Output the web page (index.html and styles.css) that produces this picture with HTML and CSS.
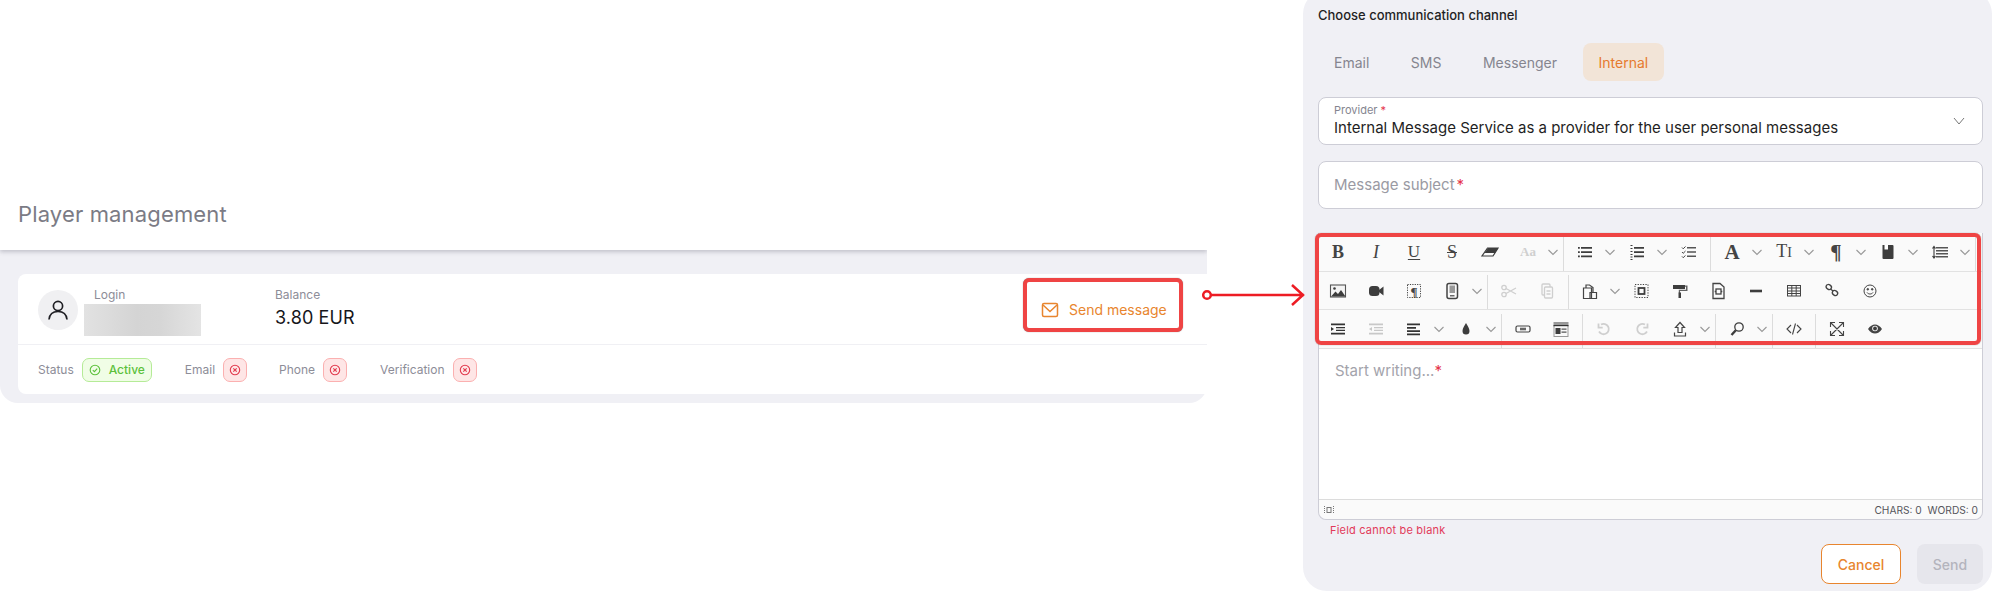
FILE: index.html
```html
<!DOCTYPE html>
<html lang="en">
<head>
  <meta charset="UTF-8" />
  <title>Player management</title>
  <link rel="stylesheet" href="styles.css">
</head>
<body>
  <svg width="0" height="0" class="defs">
    <symbol id="caret" viewBox="0 0 14 24"><path d="M2.500 10l4.500 4.500 4.500-4.500" fill="none" stroke="#999" stroke-width="1.100"/></symbol>
    <symbol id="x-circle" viewBox="0 0 12 12"><circle cx="6" cy="6" r="4.700" fill="none" stroke="#e23a4e" stroke-width="1.100"/><path d="M4.300 4.300l3.400 3.400M7.700 4.300L4.300 7.700" stroke="#e23a4e" stroke-width="1.100"/></symbol>
  </svg>

  <section class="left">
    <header class="page-head"><h1>Player management</h1></header>
    <div class="panel">
      <div class="card">
        <div class="card-top">
          <div class="avatar">
            <svg width="24" height="24" viewBox="0 0 24 24" fill="none" stroke="#1f1f24" stroke-width="1.700"><circle cx="12" cy="8" r="4.600"/><path d="M3 21.500c.5-5 4-8 9-8s8.500 3 9 8"/></svg>
          </div>
          <div class="login">
            <span class="label">Login</span>
            <div class="blurred"></div>
          </div>
          <div class="balance">
            <span class="label">Balance</span>
            <div class="amount">3.80 EUR</div>
          </div>
          <button class="send-btn">
            <svg width="18" height="18" viewBox="0 0 18 18" fill="none" stroke="#e8852e" stroke-width="1.500"><rect x="1.500" y="2.500" width="15" height="13" rx="1.500"/><path d="M2 4l7 6.500L16 4"/></svg>
            Send message
          </button>
        </div>
        <div class="card-bottom">
          <span class="label">Status</span>
          <span class="badge ok">
            <svg width="12" height="12" viewBox="0 0 12 12" fill="none" stroke="#5cc13b" stroke-width="1.100"><circle cx="6" cy="6" r="4.800"/><path d="M3.800 6.100l1.600 1.500 2.800-3"/></svg>
            Active
          </span>
          <span class="label email-label">Email</span>
          <span class="badge bad"><svg width="12" height="12"><use href="#x-circle"/></svg></span>
          <span class="label phone-label">Phone</span>
          <span class="badge bad"><svg width="12" height="12"><use href="#x-circle"/></svg></span>
          <span class="label verif-label">Verification</span>
          <span class="badge bad"><svg width="12" height="12"><use href="#x-circle"/></svg></span>
        </div>
      </div>
    </div>
  </section>

  <svg class="connector" width="110" height="30" viewBox="0 0 110 30" fill="none" stroke="#ed1c24" stroke-width="2.500">
    <circle cx="7" cy="15" r="3.800" fill="#fff"/>
    <path d="M11 15h93M92 5l11 10-11 10"/>
  </svg>

  <section class="dialog">
    <div class="dialog-title">Choose communication channel</div>
    <nav class="tabs">
      <span class="tab">Email</span>
      <span class="tab">SMS</span>
      <span class="tab">Messenger</span>
      <span class="tab active">Internal</span>
    </nav>

    <div class="field select">
      <div class="select-text">
        <div class="field-label">Provider <i>*</i></div>
        <div class="field-value">Internal Message Service as a provider for the user personal messages</div>
      </div>
      <svg width="14" height="14" viewBox="0 0 14 14" fill="none" stroke="#777" stroke-width="1"><path d="M2 4l5 6 5-6"/></svg>
    </div>

    <div class="field subject"><span>Message subject<i>*</i></span></div>

    <div class="editor">
      <div class="toolbar-mark"></div>
      <div class="toolbar">
        <div class="tb-row">
          <span class="btn glyph bold">B</span>
          <span class="btn glyph ital">I</span>
          <span class="btn glyph under">U</span>
          <span class="btn glyph strike">S</span>
          <span class="btn"><svg class="ico" viewBox="0 0 24 24"><path d="M9.500 8H20l-5 8H4z" fill="#fafafa" stroke="#3d3d3d" stroke-width="1.200"/><path d="M10 8h10l-3 5H6.500z" fill="#3d3d3d"/></svg></span>
          <span class="btn drop"><span class="glyph-sm off">Aa</span><svg class="car"><use href="#caret"/></svg></span>
          <i class="sep"></i>
          <span class="btn drop"><svg class="ico" viewBox="0 0 24 24" fill="#3d3d3d"><path d="M8 7h11v1.800H8zM8 11.200h11V13H8zM8 15.500h11v1.800H8z"/><path d="M5 7h1.800v1.800H5zM5 11.200h1.800V13H5zM5 15.500h1.800v1.800H5z"/></svg><svg class="car"><use href="#caret"/></svg></span>
          <span class="btn drop"><svg class="ico" viewBox="0 0 24 24" fill="#3d3d3d"><path d="M9 7h10v1.800H9zM9 11.200h10V13H9zM9 15.500h10v1.800H9z"/><path d="M5.500 5h2v1h-2zM5.500 8h2v1h-2zM5.500 11h2v1h-2zM5.500 14h2v1h-2zM5.500 16.500h2v1h-2zM5.500 19h2v1h-2z"/></svg><svg class="car"><use href="#caret"/></svg></span>
          <span class="btn"><svg class="ico" viewBox="0 0 24 24" fill="#555"><path d="M10 7h9v1.400h-9zM10 11.300h9v1.400h-9zM10 15.600h9V17h-9z"/><path d="M5 7.500l1.200 1.300L8.500 6.500M5 12l1.200 1.300 2.300-2.300M5 16.400l1.200 1.300 2.300-2.300" fill="none" stroke="#444" stroke-width="1"/></svg></span>
          <i class="sep"></i>
          <span class="btn drop"><span class="glyph bold big">A</span><svg class="car"><use href="#caret"/></svg></span>
          <span class="btn drop"><span class="glyph ti">T<small>I</small></span><svg class="car"><use href="#caret"/></svg></span>
          <span class="btn drop"><span class="glyph bold big">¶</span><svg class="car"><use href="#caret"/></svg></span>
          <span class="btn drop"><svg class="ico" viewBox="0 0 24 24"><path d="M7 5h9.500a1 1 0 0 1 1 1v12a1 1 0 0 1-1 1H7.500a1 1 0 0 1-1-1V5.500z" fill="#3d3d3d"/><path d="M8.500 5H12v4.500H8.500z" fill="#fff"/></svg><svg class="car"><use href="#caret"/></svg></span>
          <span class="btn drop"><svg class="ico" viewBox="0 0 24 24"><path d="M8 7h12v1.600H8zM8 10h12v1.600H8zM8 13h12v1.600H8zM8 16h12v1.600H8z" fill="#555"/><path d="M6 7v10.500M4.500 8.500L6 6.500l1.500 2M4.500 16L6 18l1.500-2" fill="none" stroke="#3d3d3d" stroke-width="1.100"/></svg><svg class="car"><use href="#caret"/></svg></span>
          <i class="sep"></i>
        </div>

        <div class="tb-row">
          <span class="btn"><svg class="ico" viewBox="0 0 24 24"><rect x="4.500" y="6" width="15" height="12" fill="#f4f4f4" stroke="#555" stroke-width="1.100"/><path d="M5 17.500l4.500-5 2.500 2.500 3-4 4.500 6.500z" fill="#3d3d3d"/><circle cx="8.500" cy="9.500" r="1.300" fill="#3d3d3d"/></svg></span>
          <span class="btn"><svg class="ico" viewBox="0 0 24 24" fill="#3d3d3d"><rect x="5" y="7" width="10.500" height="10" rx="3.500"/><path d="M15 11l4.500-3.500v9L15 13z"/></svg></span>
          <span class="btn"><svg class="ico" viewBox="0 0 24 24"><rect x="5.500" y="5.500" width="13" height="13" fill="none" stroke="#444" stroke-dasharray="1.200 1.200"/><text x="12" y="16.500" class="svg-glyph">¶</text></svg></span>
          <span class="btn drop"><svg class="ico" viewBox="0 0 24 24" fill="none" stroke="#444"><rect x="7" y="4.500" width="10.500" height="15" rx="2" stroke-width="1.500"/><path d="M9.500 6.500h5.500v7.500H9.500z" fill="#999" stroke="none"/><path d="M10 16.800h4.500" stroke-width="1.200"/></svg><svg class="car"><use href="#caret"/></svg></span>
          <i class="sep"></i>
          <span class="btn"><svg class="ico" viewBox="0 0 24 24" fill="none" stroke="#cfcfcf" stroke-width="1.300"><circle cx="7" cy="8.500" r="2.200"/><circle cx="7" cy="15.500" r="2.200"/><path d="M9 9.500l10 5.500M9 14.500l10-5.500"/></svg></span>
          <span class="btn"><svg class="ico" viewBox="0 0 24 24" fill="none" stroke="#cfcfcf" stroke-width="1.300"><rect x="7" y="5" width="8" height="11" rx="1"/><rect x="9.500" y="8" width="8" height="11" rx="1" fill="#fafafa"/><path d="M11.500 12h4M11.500 15h4"/></svg></span>
          <i class="sep"></i>
          <span class="btn drop"><svg class="ico" viewBox="0 0 24 24" fill="none" stroke="#444" stroke-width="1.200"><path d="M5.500 9h8v10.500h-8zM12 13.500h6.500v6H12zM8 9V6h3.500l3.500 2.500V13"/></svg><svg class="car"><use href="#caret"/></svg></span>
          <span class="btn"><svg class="ico" viewBox="0 0 24 24"><rect x="5" y="5.500" width="13" height="13" fill="none" stroke="#444" stroke-dasharray="1.300 1.300"/><rect x="8.500" y="9" width="6" height="6" fill="none" stroke="#3d3d3d" stroke-width="1.800"/></svg></span>
          <span class="btn"><svg class="ico" viewBox="0 0 24 24" fill="#3d3d3d"><path d="M5 6h12v4H5z"/><path d="M17 6.500h2.500V12H12v2h-1.200v-3.200H18V7.800h-1z" opacity=".8"/><path d="M10.500 13.500H13V19h-2.500z"/></svg></span>
          <span class="btn"><svg class="ico" viewBox="0 0 24 24" fill="none" stroke="#444" stroke-width="1.300"><path d="M7 4.500h7l4 3.500v11.500H7z"/><rect x="10" y="10" width="5" height="5"/><path d="M8.700 12.500H10M15 12.500h1.300"/></svg></span>
          <span class="btn"><svg class="ico" viewBox="0 0 24 24"><path d="M6 10.700h12v2.600H6z" fill="#3d3d3d"/></svg></span>
          <span class="btn"><svg class="ico" viewBox="0 0 24 24" fill="none" stroke="#444" stroke-width="1"><rect x="5.500" y="6.500" width="13" height="10.500"/><path d="M5.500 9h13M5.500 12h13M5.500 14.500h13M9.800 6.500V17M14.200 6.500V17"/></svg></span>
          <span class="btn"><svg class="ico" viewBox="0 0 24 24" fill="none" stroke="#444" stroke-width="1.300"><ellipse cx="8.800" cy="8" rx="2.800" ry="2.300" transform="rotate(35 8.800 8)"/><ellipse cx="15" cy="14" rx="2.800" ry="2.300" transform="rotate(35 15 14)"/><path d="M10.500 10l2.500 2"/></svg></span>
          <span class="btn"><svg class="ico" viewBox="0 0 24 24" fill="none" stroke="#444" stroke-width="1"><circle cx="12" cy="12" r="6"/><circle cx="9.800" cy="10.300" r=".8" fill="#444"/><circle cx="14.200" cy="10.300" r=".8" fill="#444"/><path d="M9 13.500c1.300 2 4.700 2 6 0"/></svg></span>
        </div>

        <div class="tb-row">
          <span class="btn"><svg class="ico" viewBox="0 0 24 24" fill="#333"><path d="M5 6.500h14v1.800H5zM10 10h9v1.300h-9zM10 12.700h9V14h-9zM5 15.700h14v1.800H5zM5 10l3 2-3 2z"/></svg></span>
          <span class="btn"><svg class="ico" viewBox="0 0 24 24" fill="#c8c8c8"><path d="M5 6.500h14v1.800H5zM10 10h9v1.300h-9zM10 12.700h9V14h-9zM5 15.700h14v1.800H5zM8 10l-3 2 3 2z"/></svg></span>
          <span class="btn drop"><svg class="ico" viewBox="0 0 24 24" fill="#333"><path d="M5 6.500h13v1.800H5zM5 10h9v1.800H5zM5 13.200h13V15H5zM5 16.500h13v1.800H5z"/></svg><svg class="car"><use href="#caret"/></svg></span>
          <span class="btn drop"><svg class="ico" viewBox="0 0 24 24" fill="#3d3d3d"><path d="M12 6c1.500 3 3.500 5 3.500 8a3.500 3.500 0 0 1-7 0c0-3 2-5 3.500-8z"/></svg><svg class="car"><use href="#caret"/></svg></span>
          <i class="sep"></i>
          <span class="btn"><svg class="ico" viewBox="0 0 24 24"><rect x="5" y="9" width="14" height="6" rx="1.500" fill="none" stroke="#444" stroke-width="1.200"/><rect x="9" y="10.700" width="6" height="2.600" fill="#666"/></svg></span>
          <span class="btn"><svg class="ico" viewBox="0 0 24 24"><rect x="4.500" y="5" width="15" height="15" fill="#999"/><rect x="4.500" y="8" width="15" height="1.300" fill="#333"/><rect x="5.500" y="9.300" width="13" height="9.700" fill="#fafafa"/><rect x="6.500" y="11" width="5" height="6" fill="#3d3d3d"/><path d="M12.500 11.500h5v1.300h-5zM12.500 14.500h5v1.300h-5z" fill="#555"/></svg></span>
          <i class="sep"></i>
          <span class="btn"><svg class="ico" viewBox="0 0 24 24" fill="none" stroke="#cfcfcf" stroke-width="1.800"><path d="M9 7.500a5.200 5.200 0 1 1-2 7"/><path d="M6.500 6.500v4.200h4.200"/></svg></span>
          <span class="btn"><svg class="ico" viewBox="0 0 24 24" fill="none" stroke="#cfcfcf" stroke-width="1.800"><path d="M15 7.500a5.200 5.200 0 1 0 2 7"/><path d="M17.500 6.500v4.200h-4.200"/></svg></span>
          <span class="btn drop"><svg class="ico" viewBox="0 0 24 24" fill="none" stroke="#444" stroke-width="1.200"><path d="M12 5.500l-4.500 5H10v5h4v-5h2.500zM6.500 15.500v3.500h11v-3.500"/></svg><svg class="car"><use href="#caret"/></svg></span>
          <i class="sep"></i>
          <span class="btn drop"><svg class="ico" viewBox="0 0 24 24" fill="none" stroke="#3d3d3d" stroke-width="1.300"><circle cx="14" cy="10" r="4.200"/><path d="M10.800 13.200L6.500 18" stroke-width="2.400"/></svg><svg class="car"><use href="#caret"/></svg></span>
          <i class="sep"></i>
          <span class="btn"><svg class="ico" viewBox="0 0 24 24" fill="none" stroke="#444" stroke-width="1.100"><path d="M9 8l-4 4 4 4M15 8l4 4-4 4M13.500 6.500l-3 11"/></svg></span>
          <i class="sep"></i>
          <span class="btn"><svg class="ico" viewBox="0 0 24 24" fill="none" stroke="#444" stroke-width="1.100"><path d="M6 6l12 12M18 6L6 18M5.500 10V5.500H10M14 5.500h4.500V10M5.500 14v4.500H10M18.500 14v4.500H14"/></svg></span>
          <span class="btn"><svg class="ico" viewBox="0 0 24 24"><path d="M5 12c2-3 4.500-4.500 7-4.500s5 1.500 7 4.500c-2 3-4.500 4.500-7 4.500S7 15 5 12z" fill="#444"/><circle cx="12" cy="11.500" r="2.800" fill="#fafafa"/><circle cx="12" cy="11.500" r="1.900" fill="#3d3d3d"/></svg></span>
        </div>
      </div>

      <div class="content">Start writing...<i>*</i></div>
      <div class="status">
        <svg width="10" height="10" viewBox="0 0 10 10" fill="none" stroke="#777" stroke-width="1"><rect x="3" y="2.500" width="4" height="5"/><path d="M.5 1v8M9.500 1v8" stroke-dasharray="1 1"/></svg>
        <span>CHARS: 0 &nbsp;WORDS: 0</span>
      </div>
    </div>

    <div class="error">Field cannot be blank</div>
    <div class="actions">
      <button class="cancel">Cancel</button>
      <button class="send" disabled>Send</button>
    </div>
  </section>
</body>
</html>
```

FILE: styles.css
```css
* {
  box-sizing: border-box;
}

html, body {
  height: 591px;
}

body {
  margin: 0;
  display: flex;
  overflow: hidden;
  position: relative;
  background: #fff;
  font-family: 'Inter', 'Liberation Sans', sans-serif;
  color: #1f1f24;
}

.defs {
  position: absolute;
}

i {
  font-style: normal;
}

/* left side */
.left {
  width: 1207px;
  margin-right: 96px;
  flex: none;
}

.page-head {
  height: 250px;
  padding: 200px 18px 0;
  position: relative;
  background: #fff;
  box-shadow: 0 2px 4px rgba(60, 60, 80, 0.25);
  clip-path: inset(0 0 -8px 0);
}

.page-head h1 {
  margin: 0;
  font-size: 22px;
  line-height: 28px;
  font-weight: 400;
  letter-spacing: 0.15px;
  color: #7b7b85;
}

.panel {
  padding: 24px 0 9px 18px;
  background: #f0f0f5;
  border-radius: 0 0 18px 18px;
}

.card {
  height: 120px;
  background: #fff;
  border-radius: 8px 0 0 8px;
}

.card-top {
  height: 71px;
  padding: 4px 24px 0 20px;
  display: flex;
  border-bottom: 1px solid #f0f0f4;
}

.avatar {
  width: 40px;
  height: 40px;
  margin-top: 12px;
  border-radius: 50%;
  background: #f0f0f2;
  display: flex;
  align-items: center;
  justify-content: center;
}

.label {
  font-size: 12px;
  line-height: 16px;
  color: #8d8d98;
}

.login {
  width: 191px;
  margin-left: 6px;
  padding-top: 9px;
}

.login .label {
  margin-left: 10px;
  display: block;
}

.blurred {
  width: 117px;
  height: 32px;
  margin-top: 1px;
  background: linear-gradient(90deg, #e2e2e2, #d4d4d4 45%, #d6d6d6 65%, #e4e4e4);
}

.balance {
  padding-top: 9px;
}

.balance .label {
  display: block;
}

.amount {
  margin-top: 4px;
  font-size: 18px;
  line-height: 22px;
  letter-spacing: 0.1px;
  color: #16161a;
}

.send-btn {
  width: 160px;
  height: 54px;
  margin: 0 0 0 auto;
  padding: 9px 0 0 14px;
  display: flex;
  align-items: center;
  gap: 10px;
  background: #fff;
  border: 4px solid #ef4444;
  border-radius: 6px;
  box-shadow: 0 0 1px #777;
  font: 400 14px 'Inter', sans-serif;
  color: #e8852e;
}

.card-bottom {
  height: 48px;
  padding: 1px 20px 0;
  display: flex;
  align-items: center;
}

.badge {
  height: 24px;
  margin-left: 8px;
  display: inline-flex;
  align-items: center;
  justify-content: center;
  border-radius: 7px;
  border: 1px solid;
}

.badge.ok {
  width: 70px;
  gap: 8px;
  background: #f0fde6;
  border-color: #b5eb97;
  color: #5cc13b;
  font-size: 12px;
  font-weight: 500;
}

.badge.bad {
  width: 24px;
  background: #fee6e6;
  border-color: #fbb0b0;
}

.email-label {
  margin-left: 33px;
}

.phone-label {
  margin-left: 32px;
}

.verif-label {
  margin-left: 33px;
}

.connector {
  position: absolute;
  left: 1200px;
  top: 280px;
}

/* dialog */
.dialog {
  width: 689px;
  height: 601px;
  margin-top: -10px;
  padding: 15px 9px 0 15px;
  flex: none;
  background: #f0f0f5;
  border-radius: 24px;
}

.dialog-title {
  font-size: 13px;
  line-height: 20px;
  font-weight: 500;
  color: #1f1f24;
}

.tabs {
  margin-top: 18px;
  display: flex;
  gap: 9.500px;
}

.tab {
  height: 38px;
  padding: 0 16px;
  display: flex;
  align-items: center;
  border-radius: 8px;
  font-size: 14px;
  color: #85858f;
}

.tab.active {
  background: #f2e4d7;
  color: #e67a2e;
}

.field {
  height: 48px;
  margin-top: 16px;
  padding: 0 16px 0 15px;
  background: #fff;
  border: 1px solid #cdcdd6;
  border-radius: 8px;
}

.field i, .content i {
  color: #e5344b;
}

.select {
  display: flex;
  align-items: center;
  justify-content: space-between;
}

.select-text {
  margin-top: -2px;
}

.field-label {
  font-size: 11px;
  line-height: 14px;
  color: #85858f;
}

.field-value {
  font-size: 15px;
  line-height: 20px;
  margin-top: 1px;
  color: #1f1f24;
}

.subject {
  padding-bottom: 2px;
  display: flex;
  align-items: center;
  font-size: 15px;
  color: #9a9aa3;
}

.subject i {
  margin-left: 2px;
}

.editor {
  margin-top: 24px;
  position: relative;
  border: 1px solid #cdcdd6;
  border-top: 0;
  border-radius: 0 0 8px 8px;
}

.toolbar-mark {
  position: absolute;
  left: -4px;
  right: 1px;
  top: 0;
  height: 112px;
  border: 4px solid #ef4444;
  border-radius: 6px;
  box-shadow: 0 0 1px #777;
  z-index: 2;
}

.toolbar {
  background: #fafafa;
}

.tb-row {
  height: 38px;
  display: flex;
  align-items: center;
  border-bottom: 1px solid #e2e2e2;
}

.tb-row:first-child {
  height: 39px;
}

.tb-row:last-child {
  border-bottom: 0;
}

.btn {
  width: 38px;
  height: 30px;
  flex: none;
  display: flex;
  align-items: center;
  justify-content: center;
}

.btn.drop {
  width: 52px;
  justify-content: flex-start;
}

.btn.drop > :first-child {
  width: 38px;
  flex: none;
  text-align: center;
}

.ico {
  width: 24px;
  height: 24px;
  flex: none;
}

.btn.drop > .ico {
  padding: 0 7px;
}

.car {
  width: 14px;
  height: 24px;
  margin-left: -1.500px;
  flex: none;
}

.sep {
  width: 1px;
  height: 34px;
  margin: 0 2px;
  flex: none;
  align-self: flex-end;
  background: #dcdcdc;
}

.glyph {
  font-family: 'Liberation Serif', serif;
  font-size: 18px;
  line-height: 24px;
  color: #444;
}

.glyph.bold {
  font-weight: 700;
}

.glyph.ital {
  font-style: italic;
}

.glyph.under {
  text-decoration: underline;
  text-underline-offset: 2px;
  font-size: 17px;
}

.glyph.strike {
  text-decoration: line-through;
  text-decoration-thickness: 1px;
}

.glyph.big {
  font-size: 21px;
}

.glyph.ti small {
  font-size: 14px;
}

.glyph-sm {
  font-family: 'Liberation Serif', serif;
  font-size: 13px;
  font-weight: 700;
}

.off {
  color: #cfcfcf;
}

.svg-glyph {
  font-family: 'Liberation Serif', serif;
  font-size: 13px;
  font-weight: 700;
  text-anchor: middle;
  fill: #444;
}

.content {
  height: 151px;
  padding: 12px 16px;
  background: #fff;
  border-top: 1px solid #e2e2e2;
  font-size: 15px;
  line-height: 20px;
  color: #a3a3ab;
}

.status {
  height: 20px;
  padding: 0 4px 0 5px;
  display: flex;
  align-items: center;
  justify-content: space-between;
  background: #fafafa;
  border-top: 1px solid #dcdcdc;
  border-radius: 0 0 8px 8px;
  font-size: 10.200px;
  color: #55555c;
}

.error {
  margin: 2px 0 0 12px;
  font-size: 11px;
  line-height: 16px;
  letter-spacing: 0.2px;
  color: #e23a5a;
}

.actions {
  margin-top: 6px;
  display: flex;
  justify-content: flex-end;
  gap: 16px;
}

.actions button {
  height: 40px;
  border-radius: 8px;
  font: 500 14px 'Inter', sans-serif;
}

.cancel {
  width: 80px;
  background: #fff;
  border: 1px solid #e8852e;
  color: #e8852e;
}

.send {
  width: 66px;
  background: #e6e6ec;
  border: 0;
  color: #b4b4bd;
}
```
